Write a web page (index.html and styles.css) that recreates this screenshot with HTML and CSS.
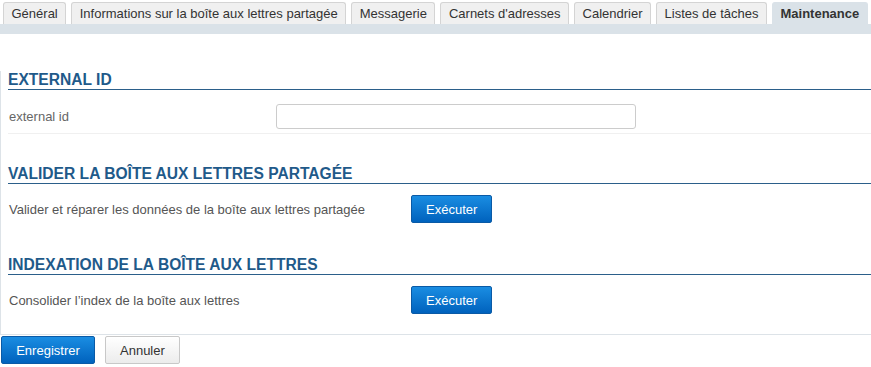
FILE: index.html
```html
<!DOCTYPE html>
<html lang="fr">
<head>
  <meta charset="UTF-8">
  <title>Maintenance – boîte aux lettres partagée</title>
  <link rel="stylesheet" href="styles.css">
</head>
<body>
  <ul class="tabs">
    <li class="tab">Général</li>
    <li class="tab">Informations sur la boîte aux lettres partagée</li>
    <li class="tab">Messagerie</li>
    <li class="tab">Carnets d'adresses</li>
    <li class="tab">Calendrier</li>
    <li class="tab">Listes de tâches</li>
    <li class="tab active">Maintenance</li>
  </ul>
  <div class="tab-band"></div>

  <div class="panel">
    <h2 class="section-title first">External ID</h2>
    <div class="row row-field">
      <label for="extid">external id</label>
      <input type="text" id="extid">
    </div>

    <h2 class="section-title">Valider la boîte aux lettres partagée</h2>
    <div class="row row-action">
      <span>Valider et réparer les données de la boîte aux lettres partagée</span>
      <button class="btn btn-primary">Exécuter</button>
    </div>

    <h2 class="section-title">Indexation de la boîte aux lettres</h2>
    <div class="row row-action">
      <span>Consolider l’index de la boîte aux lettres</span>
      <button class="btn btn-primary">Exécuter</button>
    </div>
  </div>

  <div class="actions">
    <button class="btn btn-primary btn-save">Enregistrer</button>
    <button class="btn btn-default">Annuler</button>
  </div>
</body>
</html>
```

FILE: styles.css
```css
body {
  margin: 0;
  font-family: 'Liberation Sans', Arial, sans-serif;
  font-size: 13px;
  color: #333;
  background: #fff;
}
.tabs {
  list-style: none;
  margin: 0;
  padding: 2px 0 0 3px;
  display: flex;
  gap: 5px;
  height: 22px;
}
.tab {
  background: #f0f0f0;
  border: 1px solid #d4d4d4;
  border-bottom: none;
  border-radius: 3px 3px 0 0;
  padding: 0 7.5px;
  line-height: 21px;
  color: #333;
  white-space: nowrap;
}
.tab.active {
  background: #dae2e8;
  border-color: #dae2e8;
  font-weight: bold;
}
.tab-band {
  height: 10px;
  background: #dae2e8;
}
.panel {
  border-left: 1px solid #dde3e8;
  border-bottom: 1px solid #dde3e8;
  padding-left: 7px;
  padding-bottom: 18px;
}
.section-title {
  margin: 31px 0 0;
  font-size: 15.6px;
  font-weight: bold;
  text-transform: uppercase;
  color: #1f5a8a;
  border-bottom: 1px solid #2b5f8a;
  line-height: 18px;
  padding-bottom: 0;
}
.section-title.first {
  margin-top: 37px;
}
.row {
  display: grid;
  align-items: center;
  color: #555;
  padding-left: 1px;
}
.row-field {
  grid-template-columns: 267px 360px;
  height: 44px;
  box-sizing: border-box;
  padding-top: 10px;
  border-bottom: 1px solid #f0f0f0;
}
.row-field label {
  color: #666;
}
.row-field input {
  height: 25px;
  box-sizing: border-box;
  border: 1px solid #ccc;
  border-radius: 3px;
}
.row-action {
  grid-template-columns: 402px 81px;
  padding-top: 11px;
  padding-bottom: 2px;
}
.btn {
  font-family: inherit;
  font-size: 13px;
  height: 28px;
  border-radius: 2px;
  cursor: pointer;
  padding: 0 14px;
}
.btn-primary {
  color: #fff;
  background: linear-gradient(#1a8de2, #0062bd);
  border: 1px solid #0a5aa6;
}
.btn-default {
  color: #333;
  background: linear-gradient(#fff, #ececec);
  border: 1px solid #c8c8c8;
}
.actions {
  display: flex;
  gap: 10px;
  padding: 1px 0 0 1px;
}
.btn-save {
  width: 94px;
}
```
